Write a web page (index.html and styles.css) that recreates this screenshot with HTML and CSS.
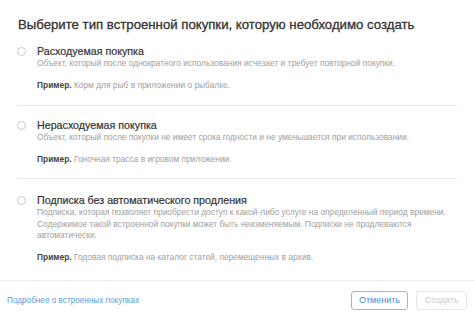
FILE: index.html
```html
<!DOCTYPE html>
<html lang="ru">
<head>
  <meta charset="UTF-8" />
  <title>Тип встроенной покупки</title>
  <link rel="stylesheet" href="styles.css">
</head>
<body>
  <div class="dialog">
    <h1 class="title">Выберите тип встроенной покупки, которую необходимо создать</h1>

    <div class="options">
      <label class="option">
        <span class="radio"></span>
        <div class="option-body">
          <div class="option-name">Расходуемая покупка</div>
          <p class="option-desc">Объект, который после однократного использования исчезает и требует повторной покупки.</p>
          <p class="option-example"><strong>Пример.</strong> Корм для рыб в приложении о рыбалке.</p>
        </div>
      </label>

      <label class="option">
        <span class="radio"></span>
        <div class="option-body">
          <div class="option-name">Нерасходуемая покупка</div>
          <p class="option-desc">Объект, который после покупки не имеет срока годности и не уменьшается при использовании.</p>
          <p class="option-example"><strong>Пример.</strong> Гоночная трасса в игровом приложении.</p>
        </div>
      </label>

      <label class="option">
        <span class="radio"></span>
        <div class="option-body">
          <div class="option-name">Подписка без автоматического продления</div>
          <p class="option-desc">Подписка, которая позволяет приобрести доступ к какой-либо услуге на определенный период времени. Содержимое такой встроенной покупки может быть неизменяемым. Подписки не продлеваются автоматически.</p>
          <p class="option-example"><strong>Пример.</strong> Годовая подписка на каталог статей, перемещенных в архив.</p>
        </div>
      </label>
    </div>

    <footer class="footer">
      <a class="more-link" href="#">Подробнее о встроенных покупках</a>
      <div class="actions">
        <button class="btn btn-cancel">Отменить</button>
        <button class="btn btn-create" disabled>Создать</button>
      </div>
    </footer>
  </div>
</body>
</html>
```

FILE: styles.css
```css
* { box-sizing: border-box; margin: 0; padding: 0; }

body {
  background: #fff;
  font-family: 'Liberation Sans', Arial, sans-serif;
  color: #333;
  width: 474px;
  height: 317px;
  overflow: hidden;
}

.dialog {
  display: flex;
  flex-direction: column;
  height: 317px;
}

.title {
  font-size: 13.2px;
  font-weight: normal;
  color: #333;
  padding: 17px 0 0 18px;
  line-height: 16px;
  -webkit-text-stroke: 0.3px #333;
}

.options {
  padding: 0 17px;
  flex: 1;
}

.option {
  display: flex;
  gap: 11px;
  border-bottom: 1px solid #e8e8e8;
}

.option:first-child { padding-top: 11.5px; padding-bottom: 14px; }
.option:nth-child(2) { padding-top: 12.5px; padding-bottom: 13px; }
.option:last-child { border-bottom: none; padding-top: 14.5px; }

.radio {
  width: 9px;
  height: 9px;
  border: 1px solid #c8c8c8;
  border-radius: 50%;
  margin-top: 2px;
  flex-shrink: 0;
}

.option-body {
  max-width: 418px;
}

.option-name {
  font-size: 10.7px;
  line-height: 13px;
  color: #333;
  -webkit-text-stroke: 0.2px #333;
}

.option-desc {
  font-size: 8.4px;
  line-height: 11.5px;
  color: #a0a0a0;
  margin-top: 0.5px;
}

.option-example {
  font-size: 8.4px;
  line-height: 11px;
  color: #a0a0a0;
  margin-top: 10.5px;
}

.option-example strong {
  color: #444;
}

.footer {
  display: flex;
  align-items: center;
  justify-content: space-between;
  border-top: 1px solid #ebebeb;
  height: 37px;
  padding: 0 7px 0 7px;
}

.more-link {
  font-size: 8.2px;
  color: #5a9de0;
  text-decoration: none;
  margin-top: 2px;
}

.actions {
  display: flex;
  gap: 8px;
  margin-top: 2px;
}

.btn {
  font-family: 'Liberation Sans', Arial, sans-serif;
  font-size: 9px;
  background: #fff;
  border-radius: 3px;
  height: 19px;
}

.btn-cancel {
  width: 57px;
  color: #4a90d9;
  border: 1px solid #8bbcea;
}

.btn-create {
  width: 51px;
  color: #ccc;
  border: 1px solid #e6e6e6;
}
```
